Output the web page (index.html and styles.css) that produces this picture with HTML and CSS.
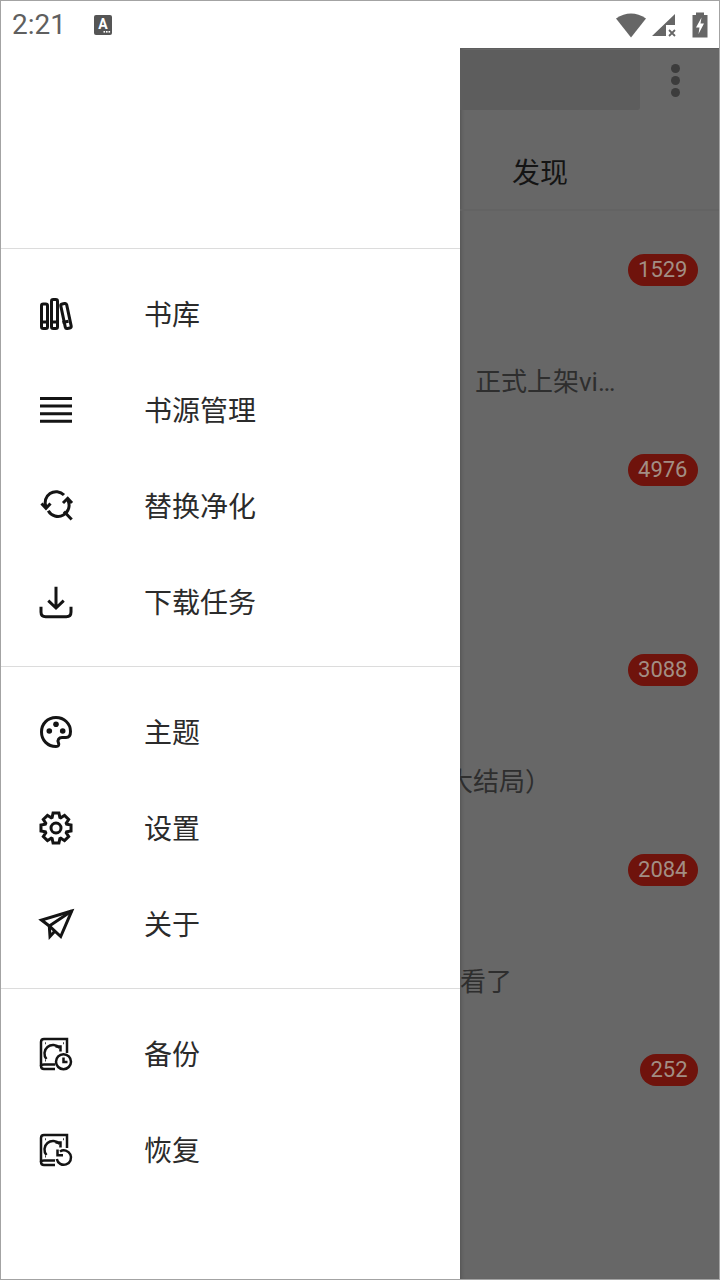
FILE: index.html
```html
<!DOCTYPE html>
<html lang="zh">
<head>
    <meta charset="UTF-8">
    <meta name="viewport" content="width=device-width, initial-scale=1.0">
    <title>阅读</title>
    <link rel="stylesheet" href="styles.css">
</head>
<body>

<div class="screen">
    <div class="status-bar">
        <span class="clock">2:21</span>
        <svg class="status-app" width="20" height="22" viewBox="0 0 20 22">
            <rect x="1" y="1" width="18" height="20" rx="2" fill="#555"/>
            <text x="10" y="15" text-anchor="middle" class="status-app-letter">A</text>
            <rect x="10.500" y="17" width="1.600" height="1.600" fill="#fff"/>
            <rect x="13" y="17" width="1.600" height="1.600" fill="#fff"/>
            <rect x="15.500" y="17" width="1.600" height="1.600" fill="#fff"/>
        </svg>
        <div class="status-icons">
            <svg width="32" height="26" viewBox="0 0 32 26">
                <path d="M1 6.500Q16 -3.500 31 6.500L16 25.500Z" fill="#666"/>
            </svg>
            <svg width="26" height="24" viewBox="0 0 26 24">
                <path d="M1 23 24 1V12H15V23Z" fill="#666"/>
                <path d="M18 17 24 23M24 17 18 23" stroke="#666" stroke-width="1.800" fill="none"/>
            </svg>
            <svg width="16" height="26" viewBox="0 0 16 26">
                <path d="M4 0.500H12V3H15.500V25.500H0.500V3H4Z" fill="#666"/>
                <path d="M9.500 5.500 4 15.500H7.500L6.500 22 12 11.500H8.500Z" fill="#fff"/>
            </svg>
        </div>
    </div>

    <div class="main">
        <nav class="drawer">
            <div class="drawer-header"></div>

            <div class="drawer-group">
                <a class="drawer-item">
                    <svg class="drawer-icon" viewBox="0 0 32 32">
                        <rect x="1.500" y="6" width="6" height="24.500" rx="1.800"/>
                        <rect x="11.500" y="1.500" width="6" height="29" rx="1.800"/>
                        <rect x="23" y="5.500" width="6" height="25" rx="1.800" transform="rotate(-12 26 18)"/>
                        <path d="M1.500 24H7.500M11.500 24H17.500M22.500 24.500 28.500 23.200"/>
                    </svg>
                    <span>书库</span>
                </a>
                <a class="drawer-item">
                    <svg class="drawer-icon" viewBox="0 0 32 32">
                        <path d="M0 4.500H32M0 12H32M0 19.700H32M0 27.200H32"/>
                    </svg>
                    <span>书源管理</span>
                </a>
                <a class="drawer-item">
                    <svg class="drawer-icon" viewBox="0 0 32 32">
                        <path d="M6 17A11 11 0 0 1 24 5"/>
                        <path d="M27.700 10A11 11 0 0 1 8.300 20.700"/>
                        <path d="M1.500 13.500 6 18.300 10.500 13.500"/>
                        <path d="M23 13 27.700 8.300 32 13"/>
                        <path d="M24 21.500 31.700 29.500"/>
                    </svg>
                    <span>替换净化</span>
                </a>
                <a class="drawer-item">
                    <svg class="drawer-icon" viewBox="0 0 32 32">
                        <path d="M16 0.700V22M8.300 14.700 16 22 23.700 14.700"/>
                        <path d="M1 20.700V26Q1 30.700 5.700 30.700H26.300Q31 30.700 31 26V20.700"/>
                    </svg>
                    <span>下载任务</span>
                </a>
            </div>

            <div class="drawer-group">
                <a class="drawer-item">
                    <svg class="drawer-icon" viewBox="0 0 32 32">
                        <path d="M16 1.500C7.700 1.500 1.500 7.700 1.500 16S7.700 30.500 16 30.500C18.500 30.500 19.500 29 18.500 27C17 24 19 21.500 22 21.500H26C29 21.500 30.500 19 30.500 15.500C30.500 7.500 24 1.500 16 1.500Z"/>
                        <circle class="solid" cx="9.300" cy="15" r="2.800"/>
                        <circle class="solid" cx="16" cy="8.300" r="2.800"/>
                        <circle class="solid" cx="22.700" cy="15" r="2.800"/>
                    </svg>
                    <span>主题</span>
                </a>
                <a class="drawer-item">
                    <svg class="drawer-icon" viewBox="0 0 32 32">
                        <polygon transform="translate(16 16)" points="-3.860,-10.620 -2.920,-15.020 2.920,-15.020 3.860,-10.620 4.780,-10.240 8.560,-12.680 12.680,-8.560 10.240,-4.780 10.620,-3.860 15.020,-2.920 15.020,2.920 10.620,3.860 10.240,4.780 12.680,8.560 8.560,12.680 4.780,10.240 3.860,10.620 2.920,15.020 -2.920,15.020 -3.860,10.620 -4.780,10.240 -8.560,12.680 -12.680,8.560 -10.240,4.780 -10.620,3.860 -15.020,2.920 -15.020,-2.920 -10.620,-3.860 -10.240,-4.780 -12.680,-8.560 -8.560,-12.680 -4.780,-10.240"/>
                        <circle cx="16" cy="16" r="5"/>
                    </svg>
                    <span>设置</span>
                </a>
                <a class="drawer-item">
                    <svg class="drawer-icon" viewBox="0 0 32 32">
                        <path d="M31.700 3 1.500 12 9.300 18 20.700 28.500Z"/>
                        <path d="M31.700 3 9.300 18 10 28.500 15 23"/>
                    </svg>
                    <span>关于</span>
                </a>
            </div>

            <div class="drawer-group drawer-group-last">
                <a class="drawer-item">
                    <svg class="drawer-icon drawer-icon-thin" viewBox="0 0 32 32">
                        <path d="M15 31H4Q1 31 1 28V4Q1 1 4 1H27V15"/>
                        <path d="M1 28Q1 26.500 4 26.500H15"/>
                        <path d="M6.500 21A7.500 7.500 0 1 1 19.500 10"/>
                        <path d="M15.500 8.500H20.500V13.500"/>
                        <path class="dot" d="M5 5.200H5.800M23 5.200H23.800M5 22.500H5.800"/>
                        <circle class="mask" cx="23.500" cy="23.700" r="7.500"/>
                        <path d="M23.500 19.500V24H27.500"/>
                    </svg>
                    <span>备份</span>
                </a>
                <a class="drawer-item">
                    <svg class="drawer-icon drawer-icon-thin" viewBox="0 0 32 32">
                        <path d="M15 31H4Q1 31 1 28V4Q1 1 4 1H27V14"/>
                        <path d="M1 28Q1 26.500 4 26.500H15"/>
                        <path d="M6.500 21A7.500 7.500 0 1 1 19.500 10"/>
                        <path d="M15.500 8.500H20.500V13.500"/>
                        <path class="dot" d="M5 5.200H5.800M23 5.200H23.800M5 22.500H5.800"/>
                        <circle class="mask-plain" cx="24" cy="23.700" r="7.500"/>
                        <path d="M20 17.500A7.200 7.200 0 1 1 16.800 25"/>
                        <path d="M17.500 15.500V21.300H23"/>
                    </svg>
                    <span>恢复</span>
                </a>
            </div>
        </nav>

        <div class="backdrop">
            <header class="app-bar">
                <div class="app-bar-top">
                    <div class="search-box"></div>
                    <div class="more-dots">
                        <i></i><i></i><i></i>
                    </div>
                </div>
                <div class="tab">发现</div>
            </header>

            <div class="book-row">
                <span class="badge">1529</span>
                <div class="book-title">正式上架vi…</div>
            </div>
            <div class="book-row">
                <span class="badge">4976</span>
            </div>
            <div class="book-row">
                <span class="badge">3088</span>
                <div class="book-title book-title-cut">大结局）</div>
            </div>
            <div class="book-row">
                <span class="badge">2084</span>
                <div class="book-title book-title-flush">看了</div>
            </div>
            <div class="book-row">
                <span class="badge">252</span>
            </div>
        </div>
    </div>
</div>

</body>
</html>
```

FILE: styles.css
```css
* {
    margin: 0;
    padding: 0;
    box-sizing: border-box;
}

body {
    font-family: Roboto, "Noto Sans CJK SC", sans-serif;
    background-color: #fff;
}

.screen {
    display: flex;
    flex-direction: column;
    width: 720px;
    height: 1280px;
    border: 1px solid #a3a3a3;
    overflow: hidden;
}

/* status bar */
.status-bar {
    display: flex;
    align-items: center;
    flex: 0 0 47px;
    padding: 0 11px 0 11px;
    background-color: #fff;
}

.clock {
    width: 81px;
    font-size: 28px;
    color: #5f5f5f;
}

.status-app {
    display: block;
}

.status-app-letter {
    font-size: 14px;
    font-weight: 700;
    fill: #fff;
}

.status-icons {
    display: flex;
    align-items: center;
    gap: 4px;
    margin-left: auto;
}

.status-icons svg {
    display: block;
}

.status-icons svg:last-child {
    margin-left: 11px;
}

/* drawer */
.main {
    display: flex;
    flex: 1;
    min-height: 0;
}

.drawer {
    display: flex;
    flex-direction: column;
    flex: 0 0 459px;
    background-color: #fff;
}

.drawer-header {
    flex: 0 0 200px;
}

.drawer-group {
    padding: 17px 0 16px;
    border-top: 1px solid #dcdcdc;
}

.drawer-item {
    display: flex;
    align-items: center;
    height: 96px;
    padding-left: 39px;
    font-size: 28px;
    color: #2b2b2b;
}

.drawer-item span {
    margin-bottom: 3px;
}

.drawer-icon {
    flex: 0 0 32px;
    width: 32px;
    height: 32px;
    margin-right: 72px;
    fill: none;
    stroke: #141414;
    stroke-width: 3;
    overflow: visible;
}

.drawer-icon-thin {
    stroke-width: 2.500;
}

.drawer-icon .solid {
    fill: #141414;
    stroke: none;
}

.drawer-icon .dot {
    stroke-width: 2;
}

.drawer-icon .mask {
    fill: #fff;
}

.drawer-icon .mask-plain {
    fill: #fff;
    stroke: none;
}

/* dimmed page behind the drawer */
.backdrop {
    flex: 1;
    min-width: 0;
    overflow: hidden;
    background-color: #676767;
    box-shadow: inset 4px 0 4px -3px rgba(0, 0, 0, 0.2);
}

.app-bar {
    height: 163px;
    border-top: 1px solid #5e5e5e;
    border-bottom: 2px solid #636363;
}

.app-bar-top {
    display: flex;
    height: 62px;
    padding-top: 1px;
}

.search-box {
    width: 180px;
    height: 60px;
    background-color: #5d5d5d;
    border-bottom-right-radius: 3px;
}

.more-dots {
    display: flex;
    flex-direction: column;
    gap: 3px;
    margin: 14px 0 0 31px;
}

.more-dots i {
    display: block;
    width: 9px;
    height: 9px;
    border-radius: 50%;
    background-color: #3c3c3c;
}

.tab {
    width: 160px;
    margin-top: 43px;
    font-size: 28px;
    line-height: 40px;
    text-align: center;
    color: #141414;
}

.book-row {
    display: flex;
    flex-direction: column;
    height: 200px;
    padding-top: 43px;
}

.badge {
    align-self: flex-end;
    height: 32px;
    margin-right: 21px;
    padding: 0 10.500px;
    border-radius: 16px;
    font-size: 22px;
    line-height: 32px;
    color: #a28e84;
    background-color: #6f130c;
}

.book-title {
    margin-top: 80px;
    padding-left: 15px;
    font-size: 26px;
    line-height: 32px;
    white-space: nowrap;
    color: #2e2e2e;
}

.book-title-cut {
    margin-left: -13px;
    padding-left: 0;
}

.book-title-flush {
    padding-left: 0;
}
```
